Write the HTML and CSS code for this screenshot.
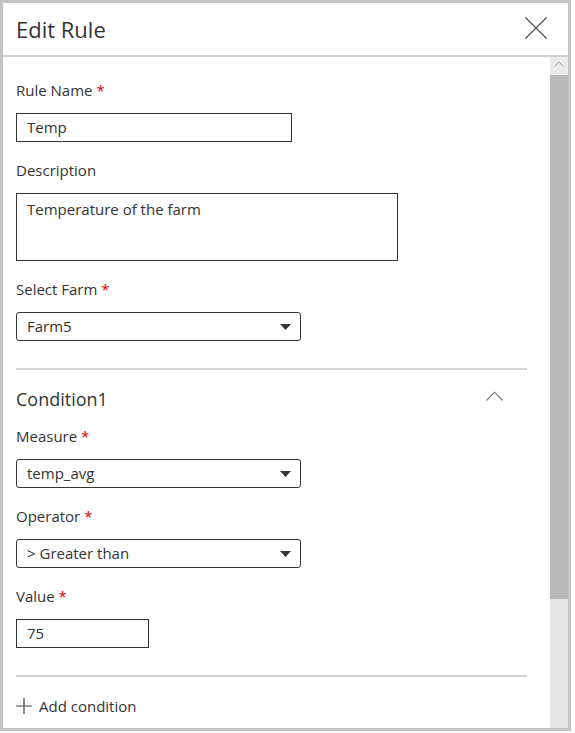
FILE: index.html
```html
<!DOCTYPE html>
<html lang="en">
<head>
<meta charset="utf-8">
<title>Edit Rule</title>
<link rel="stylesheet" href="styles.css">
</head>
<body>
<div class="panel">
  <div class="header">
    <div class="title">Edit Rule</div>
    <svg class="close" width="22" height="22" viewBox="0 0 22 22"><path d="M0.5 0.5 L21.5 21.5 M21.5 0.5 L0.5 21.5" stroke="#555" stroke-width="1.3" fill="none"/></svg>
  </div>
  <div class="body">
    <div class="content">
      <div class="field">
        <div class="label">Rule Name <span class="req">*</span></div>
        <div class="textbox w-name">Temp</div>
      </div>
      <div class="field">
        <div class="label">Description</div>
        <div class="textarea">Temperature of the farm</div>
      </div>
      <div class="field">
        <div class="label">Select Farm <span class="req">*</span></div>
        <div class="select"><span>Farm5</span><svg class="caret" width="11" height="6" viewBox="0 0 11 6"><path d="M0 0 H11 L5.5 6 Z" fill="#333"/></svg></div>
      </div>
      <div class="divider"></div>
      <div class="cond-head">
        <div class="cond-title">Condition1</div>
        <svg class="chev" width="17" height="10" viewBox="0 0 17 10"><path d="M0.5 9.5 L8.5 1.2 L16.5 9.5" stroke="#777" stroke-width="1.1" fill="none"/></svg>
      </div>
      <div class="field">
        <div class="label">Measure <span class="req">*</span></div>
        <div class="select"><span>temp_avg</span><svg class="caret" width="11" height="6" viewBox="0 0 11 6"><path d="M0 0 H11 L5.5 6 Z" fill="#333"/></svg></div>
      </div>
      <div class="field">
        <div class="label">Operator <span class="req">*</span></div>
        <div class="select"><span>&gt; Greater than</span><svg class="caret" width="11" height="6" viewBox="0 0 11 6"><path d="M0 0 H11 L5.5 6 Z" fill="#333"/></svg></div>
      </div>
      <div class="field">
        <div class="label">Value <span class="req">*</span></div>
        <div class="textbox w-value">75</div>
      </div>
      <div class="divider"></div>
      <div class="add">
        <svg class="plus" width="16" height="16" viewBox="0 0 16 16"><path d="M8 0 V16 M0 8 H16" stroke="#444" stroke-width="1.2" fill="none"/></svg>
        <span>Add condition</span>
      </div>
    </div>
    <div class="scrollbar">
      <div class="sb-arrow"><svg width="10" height="6" viewBox="0 0 10 6"><path d="M0.5 5.5 L5 1 L9.5 5.5" stroke="#9a9a9a" stroke-width="1" fill="none"/></svg></div>
      <div class="sb-thumb"></div>
      <div class="sb-track"></div>
    </div>
  </div>
</div>
</body>
</html>
```
FILE: styles.css
```css
html, body {
  margin: 0;
  padding: 0;
  background: #fff;
}
body {
  font-family: "Open Sans", "Noto Sans", sans-serif;
  color: #333;
  font-size: 15px;
}
.panel {
  width: 565px;
  height: 725px;
  border: 3px solid #c4c4c4;
  display: flex;
  flex-direction: column;
  overflow: hidden;
}
.header {
  height: 52px;
  flex: none;
  border-bottom: 2px solid #d2d2d2;
  display: flex;
  align-items: center;
  justify-content: space-between;
  padding: 0 21px 0 13px;
}
.title {
  font-size: 22px;
  line-height: 30px;
  color: #333;
}
.close {
  display: block;
  margin-top: -2px;
}
.body {
  flex: 1;
  display: flex;
  min-height: 0;
}
.content {
  flex: 1;
  padding: 23px 23px 0 13px;
  overflow: hidden;
}
.field {
  margin-bottom: 18px;
}
.label {
  line-height: 20px;
  height: 20px;
  margin-bottom: 13px;
  white-space: nowrap;
}
.req {
  color: #e00000;
}
.textbox {
  height: 29px;
  box-sizing: border-box;
  border: 1px solid #333;
  padding: 0 10px;
  line-height: 27px;
}
.w-name { width: 276px; }
.w-value { width: 133px; }
.textarea {
  width: 382px;
  height: 68px;
  box-sizing: border-box;
  border: 1px solid #333;
  padding: 5px 10px;
  line-height: 20px;
}
.select {
  width: 285px;
  height: 29px;
  box-sizing: border-box;
  border: 1px solid #333;
  border-radius: 3px;
  padding: 0 9px 0 10px;
  display: flex;
  align-items: center;
  justify-content: space-between;
  line-height: 27px;
}
.caret {
  display: block;
  margin-top: 1px;
}
.field:nth-child(3) {
  margin-bottom: 0;
}
.divider {
  height: 2px;
  background: #d4d4d4;
  margin-top: 27px;
}
.cond-head {
  margin-top: 17px;
  margin-bottom: 15px;
  height: 24px;
  display: flex;
  align-items: center;
  justify-content: space-between;
  padding-right: 24px;
}
.cond-title {
  font-size: 18px;
  line-height: 24px;
}
.chev {
  display: block;
  margin-top: -7px;
}
.field:nth-child(8) {
  margin-bottom: 0;
}
.add {
  margin-top: 19px;
  display: flex;
  align-items: center;
  gap: 7px;
  line-height: 20px;
}
.plus {
  display: block;
}
.scrollbar {
  width: 18px;
  flex: none;
  display: flex;
  flex-direction: column;
}
.sb-arrow {
  height: 18px;
  background: #ebebeb;
  display: flex;
  align-items: center;
  justify-content: center;
}
.sb-arrow svg {
  display: block;
  margin-top: -4px;
}
.sb-thumb {
  height: 524px;
  background: #b9b9b9;
}
.sb-track {
  flex: 1;
  background: #e6e6e6;
}
```
